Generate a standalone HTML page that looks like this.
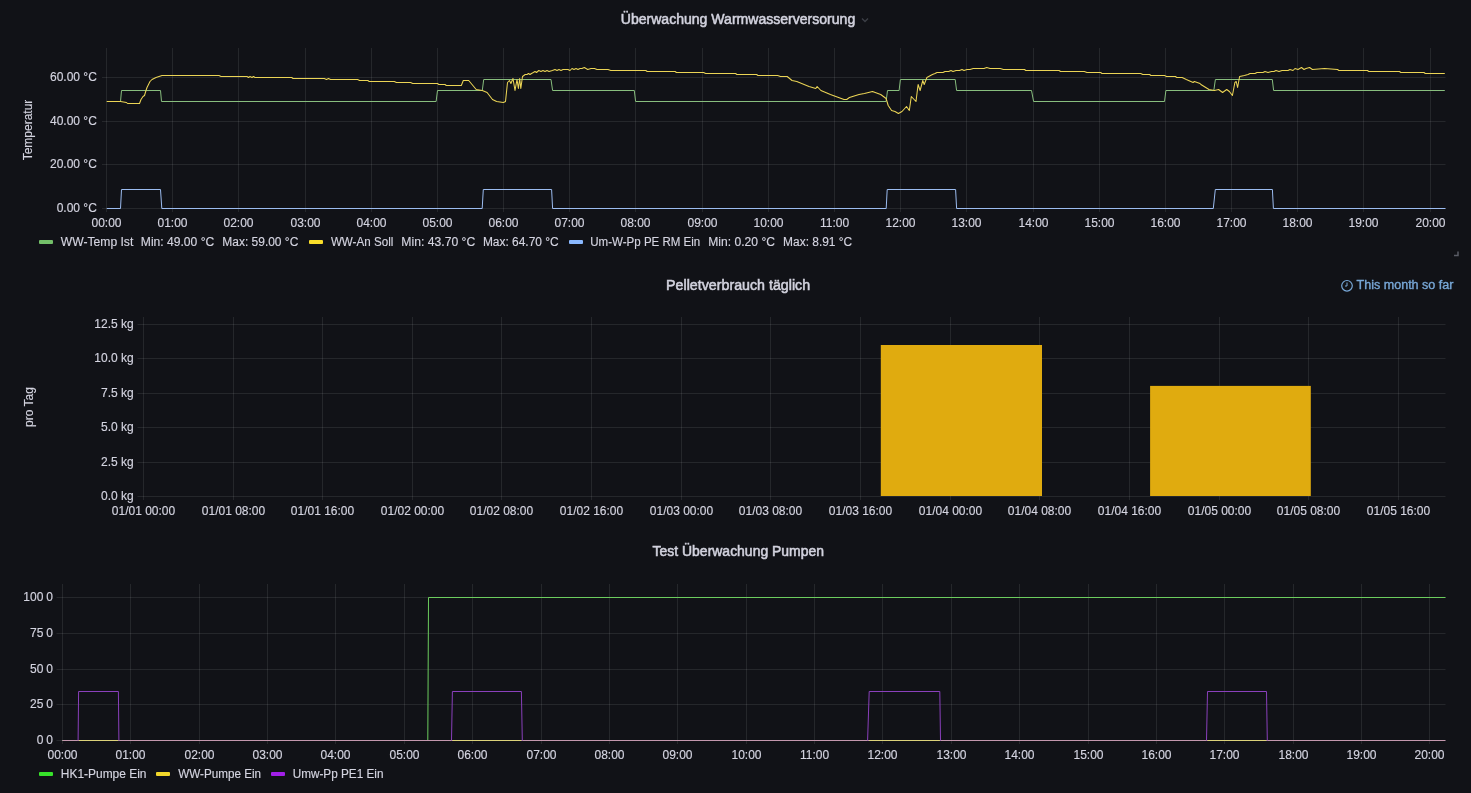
<!DOCTYPE html>
<html><head><meta charset="utf-8"><style>
html,body{margin:0;padding:0;background:#111217;width:1471px;height:793px;overflow:hidden}
svg{display:block;will-change:transform;font-family:"Liberation Sans",sans-serif}
text{stroke:#d4d4e0;stroke-width:0.15px}
.title{stroke:#d0d0dc;stroke-width:0.55px}
.tm{stroke:#78A8D8;stroke-width:0.35px}
</style></head><body>
<svg width="1471" height="793" viewBox="0 0 1471 793">
<text x="738.0" y="23.5" text-anchor="middle" font-size="14" fill="#d4d4e0" font-weight="normal" class="title" textLength="234.5" lengthAdjust="spacingAndGlyphs">Überwachung Warmwasserversorung</text>
<path d="M862 18.5L865 21.5L868 18.5" stroke="#3c3e46" stroke-width="1.4" fill="none"/>
<path d="M106.5 48V212M172.5 48V212M238.5 48V212M305.5 48V212M371.5 48V212M437.5 48V212M503.5 48V212M569.5 48V212M635.5 48V212M702.5 48V212M768.5 48V212M834.5 48V212M900.5 48V212M966.5 48V212M1033.5 48V212M1099.5 48V212M1165.5 48V212M1231.5 48V212M1297.5 48V212M1363.5 48V212M1430.5 48V212M102 208.5H1445.5M102 164.5H1445.5M102 121.5H1445.5M102 77.5H1445.5" stroke="rgba(240,250,255,0.09)" stroke-width="1" fill="none"/>
<text x="96.8" y="211.8" text-anchor="end" font-size="12" fill="#d4d4e0" font-weight="normal" >0.00 °C</text>
<text x="96.8" y="167.8" text-anchor="end" font-size="12" fill="#d4d4e0" font-weight="normal" >20.00 °C</text>
<text x="96.8" y="124.8" text-anchor="end" font-size="12" fill="#d4d4e0" font-weight="normal" >40.00 °C</text>
<text x="96.8" y="80.8" text-anchor="end" font-size="12" fill="#d4d4e0" font-weight="normal" >60.00 °C</text>
<text x="106.5" y="226.5" text-anchor="middle" font-size="12" fill="#d4d4e0" font-weight="normal" >00:00</text>
<text x="172.5" y="226.5" text-anchor="middle" font-size="12" fill="#d4d4e0" font-weight="normal" >01:00</text>
<text x="238.5" y="226.5" text-anchor="middle" font-size="12" fill="#d4d4e0" font-weight="normal" >02:00</text>
<text x="305.5" y="226.5" text-anchor="middle" font-size="12" fill="#d4d4e0" font-weight="normal" >03:00</text>
<text x="371.5" y="226.5" text-anchor="middle" font-size="12" fill="#d4d4e0" font-weight="normal" >04:00</text>
<text x="437.5" y="226.5" text-anchor="middle" font-size="12" fill="#d4d4e0" font-weight="normal" >05:00</text>
<text x="503.5" y="226.5" text-anchor="middle" font-size="12" fill="#d4d4e0" font-weight="normal" >06:00</text>
<text x="569.5" y="226.5" text-anchor="middle" font-size="12" fill="#d4d4e0" font-weight="normal" >07:00</text>
<text x="635.5" y="226.5" text-anchor="middle" font-size="12" fill="#d4d4e0" font-weight="normal" >08:00</text>
<text x="702.5" y="226.5" text-anchor="middle" font-size="12" fill="#d4d4e0" font-weight="normal" >09:00</text>
<text x="768.5" y="226.5" text-anchor="middle" font-size="12" fill="#d4d4e0" font-weight="normal" >10:00</text>
<text x="834.5" y="226.5" text-anchor="middle" font-size="12" fill="#d4d4e0" font-weight="normal" >11:00</text>
<text x="900.5" y="226.5" text-anchor="middle" font-size="12" fill="#d4d4e0" font-weight="normal" >12:00</text>
<text x="966.5" y="226.5" text-anchor="middle" font-size="12" fill="#d4d4e0" font-weight="normal" >13:00</text>
<text x="1033.5" y="226.5" text-anchor="middle" font-size="12" fill="#d4d4e0" font-weight="normal" >14:00</text>
<text x="1099.5" y="226.5" text-anchor="middle" font-size="12" fill="#d4d4e0" font-weight="normal" >15:00</text>
<text x="1165.5" y="226.5" text-anchor="middle" font-size="12" fill="#d4d4e0" font-weight="normal" >16:00</text>
<text x="1231.5" y="226.5" text-anchor="middle" font-size="12" fill="#d4d4e0" font-weight="normal" >17:00</text>
<text x="1297.5" y="226.5" text-anchor="middle" font-size="12" fill="#d4d4e0" font-weight="normal" >18:00</text>
<text x="1363.5" y="226.5" text-anchor="middle" font-size="12" fill="#d4d4e0" font-weight="normal" >19:00</text>
<text x="1430.5" y="226.5" text-anchor="middle" font-size="12" fill="#d4d4e0" font-weight="normal" >20:00</text>
<text x="0.0" y="0.0" text-anchor="middle" font-size="12" fill="#d4d4e0" font-weight="normal" transform="translate(31.6,130) rotate(-90)">Temperatur</text>
<rect x="39" y="240" width="14" height="4" fill="#73BF69" rx="1"/>
<text x="60.8" y="246.0" text-anchor="start" font-size="12" fill="#d4d4e0" font-weight="normal"  textLength="72.5" lengthAdjust="spacingAndGlyphs">WW-Temp Ist</text>
<text x="140.8" y="246.0" text-anchor="start" font-size="12" fill="#d4d4e0" font-weight="normal"  textLength="73.5" lengthAdjust="spacingAndGlyphs">Min: 49.00 °C</text>
<text x="222.3" y="246.0" text-anchor="start" font-size="12" fill="#d4d4e0" font-weight="normal"  textLength="76" lengthAdjust="spacingAndGlyphs">Max: 59.00 °C</text>
<rect x="309" y="240" width="14" height="4" fill="#FADE2A" rx="1"/>
<text x="330.9" y="246.0" text-anchor="start" font-size="12" fill="#d4d4e0" font-weight="normal"  textLength="62.4" lengthAdjust="spacingAndGlyphs">WW-An Soll</text>
<text x="401.3" y="246.0" text-anchor="start" font-size="12" fill="#d4d4e0" font-weight="normal"  textLength="74" lengthAdjust="spacingAndGlyphs">Min: 43.70 °C</text>
<text x="482.9" y="246.0" text-anchor="start" font-size="12" fill="#d4d4e0" font-weight="normal"  textLength="75.8" lengthAdjust="spacingAndGlyphs">Max: 64.70 °C</text>
<rect x="569" y="240" width="14" height="4" fill="#8AB8FF" rx="1"/>
<text x="590.3" y="246.0" text-anchor="start" font-size="12" fill="#d4d4e0" font-weight="normal"  textLength="110" lengthAdjust="spacingAndGlyphs">Um-W-Pp PE RM Ein</text>
<text x="708.3" y="246.0" text-anchor="start" font-size="12" fill="#d4d4e0" font-weight="normal"  textLength="66.7" lengthAdjust="spacingAndGlyphs">Min: 0.20 °C</text>
<text x="783.1" y="246.0" text-anchor="start" font-size="12" fill="#d4d4e0" font-weight="normal"  textLength="69.1" lengthAdjust="spacingAndGlyphs">Max: 8.91 °C</text>
<text x="738.1" y="289.6" text-anchor="middle" font-size="14" fill="#d4d4e0" font-weight="normal" class="title" textLength="144" lengthAdjust="spacingAndGlyphs">Pelletverbrauch täglich</text>
<circle cx="1347" cy="285.8" r="5.3" stroke="#78A8D8" stroke-width="1.2" fill="none"/><path d="M1347 282.5V286H1345" stroke="#78A8D8" stroke-width="1" fill="none"/>
<text x="1453.5" y="288.7" text-anchor="end" font-size="12" fill="#78A8D8" font-weight="normal" class="tm" textLength="97" lengthAdjust="spacingAndGlyphs">This month so far</text>
<path d="M1458 251.5V255.5H1454" stroke="#5a5c66" stroke-width="1.5" fill="none"/>
<path d="M143.5 317V500M233.5 317V500M322.5 317V500M412.5 317V500M501.5 317V500M591.5 317V500M681.5 317V500M770.5 317V500M860.5 317V500M950.5 317V500M1039.5 317V500M1129.5 317V500M1219.5 317V500M1308.5 317V500M1398.5 317V500M137.5 496.5H1445.5M137.5 462.5H1445.5M137.5 427.5H1445.5M137.5 393.5H1445.5M137.5 358.5H1445.5M137.5 324.5H1445.5" stroke="rgba(240,250,255,0.09)" stroke-width="1" fill="none"/>
<text x="133.7" y="499.8" text-anchor="end" font-size="12" fill="#d4d4e0" font-weight="normal" >0.0 kg</text>
<text x="133.7" y="465.8" text-anchor="end" font-size="12" fill="#d4d4e0" font-weight="normal" >2.5 kg</text>
<text x="133.7" y="430.8" text-anchor="end" font-size="12" fill="#d4d4e0" font-weight="normal" >5.0 kg</text>
<text x="133.7" y="396.8" text-anchor="end" font-size="12" fill="#d4d4e0" font-weight="normal" >7.5 kg</text>
<text x="133.7" y="361.8" text-anchor="end" font-size="12" fill="#d4d4e0" font-weight="normal" >10.0 kg</text>
<text x="133.7" y="327.8" text-anchor="end" font-size="12" fill="#d4d4e0" font-weight="normal" >12.5 kg</text>
<text x="143.5" y="514.5" text-anchor="middle" font-size="12" fill="#d4d4e0" font-weight="normal" >01/01 00:00</text>
<text x="233.5" y="514.5" text-anchor="middle" font-size="12" fill="#d4d4e0" font-weight="normal" >01/01 08:00</text>
<text x="322.5" y="514.5" text-anchor="middle" font-size="12" fill="#d4d4e0" font-weight="normal" >01/01 16:00</text>
<text x="412.5" y="514.5" text-anchor="middle" font-size="12" fill="#d4d4e0" font-weight="normal" >01/02 00:00</text>
<text x="501.5" y="514.5" text-anchor="middle" font-size="12" fill="#d4d4e0" font-weight="normal" >01/02 08:00</text>
<text x="591.5" y="514.5" text-anchor="middle" font-size="12" fill="#d4d4e0" font-weight="normal" >01/02 16:00</text>
<text x="681.5" y="514.5" text-anchor="middle" font-size="12" fill="#d4d4e0" font-weight="normal" >01/03 00:00</text>
<text x="770.5" y="514.5" text-anchor="middle" font-size="12" fill="#d4d4e0" font-weight="normal" >01/03 08:00</text>
<text x="860.5" y="514.5" text-anchor="middle" font-size="12" fill="#d4d4e0" font-weight="normal" >01/03 16:00</text>
<text x="950.5" y="514.5" text-anchor="middle" font-size="12" fill="#d4d4e0" font-weight="normal" >01/04 00:00</text>
<text x="1039.5" y="514.5" text-anchor="middle" font-size="12" fill="#d4d4e0" font-weight="normal" >01/04 08:00</text>
<text x="1129.5" y="514.5" text-anchor="middle" font-size="12" fill="#d4d4e0" font-weight="normal" >01/04 16:00</text>
<text x="1219.5" y="514.5" text-anchor="middle" font-size="12" fill="#d4d4e0" font-weight="normal" >01/05 00:00</text>
<text x="1308.5" y="514.5" text-anchor="middle" font-size="12" fill="#d4d4e0" font-weight="normal" >01/05 08:00</text>
<text x="1398.5" y="514.5" text-anchor="middle" font-size="12" fill="#d4d4e0" font-weight="normal" >01/05 16:00</text>
<text x="0.0" y="0.0" text-anchor="middle" font-size="12" fill="#d4d4e0" font-weight="normal" transform="translate(33,407) rotate(-90)">pro Tag</text>
<rect x="880.8" y="345" width="161.2" height="151" fill="#E0AB0F"/>
<rect x="1150.1" y="385.9" width="160.7" height="110.1" fill="#E0AB0F"/>
<text x="738.3" y="555.7" text-anchor="middle" font-size="14" fill="#d4d4e0" font-weight="normal" class="title" textLength="171.5" lengthAdjust="spacingAndGlyphs">Test Überwachung Pumpen</text>
<path d="M62.5 584V744M130.5 584V744M199.5 584V744M267.5 584V744M335.5 584V744M404.5 584V744M472.5 584V744M541.5 584V744M609.5 584V744M677.5 584V744M746.5 584V744M814.5 584V744M882.5 584V744M951.5 584V744M1019.5 584V744M1088.5 584V744M1156.5 584V744M1224.5 584V744M1293.5 584V744M1361.5 584V744M1429.5 584V744M56.5 740.5H1445.5M56.5 704.5H1445.5M56.5 669.5H1445.5M56.5 633.5H1445.5M56.5 597.5H1445.5" stroke="rgba(240,250,255,0.09)" stroke-width="1" fill="none"/>
<text x="43.4" y="743.8" text-anchor="end" font-size="12" fill="#d4d4e0" font-weight="normal" >0</text>
<text x="53.0" y="743.8" text-anchor="end" font-size="12" fill="#d4d4e0" font-weight="normal" >0</text>
<text x="43.4" y="707.8" text-anchor="end" font-size="12" fill="#d4d4e0" font-weight="normal" >25</text>
<text x="53.0" y="707.8" text-anchor="end" font-size="12" fill="#d4d4e0" font-weight="normal" >0</text>
<text x="43.4" y="672.8" text-anchor="end" font-size="12" fill="#d4d4e0" font-weight="normal" >50</text>
<text x="53.0" y="672.8" text-anchor="end" font-size="12" fill="#d4d4e0" font-weight="normal" >0</text>
<text x="43.4" y="636.8" text-anchor="end" font-size="12" fill="#d4d4e0" font-weight="normal" >75</text>
<text x="53.0" y="636.8" text-anchor="end" font-size="12" fill="#d4d4e0" font-weight="normal" >0</text>
<text x="43.4" y="600.8" text-anchor="end" font-size="12" fill="#d4d4e0" font-weight="normal" >100</text>
<text x="53.0" y="600.8" text-anchor="end" font-size="12" fill="#d4d4e0" font-weight="normal" >0</text>
<text x="62.5" y="758.5" text-anchor="middle" font-size="12" fill="#d4d4e0" font-weight="normal" >00:00</text>
<text x="130.5" y="758.5" text-anchor="middle" font-size="12" fill="#d4d4e0" font-weight="normal" >01:00</text>
<text x="199.5" y="758.5" text-anchor="middle" font-size="12" fill="#d4d4e0" font-weight="normal" >02:00</text>
<text x="267.5" y="758.5" text-anchor="middle" font-size="12" fill="#d4d4e0" font-weight="normal" >03:00</text>
<text x="335.5" y="758.5" text-anchor="middle" font-size="12" fill="#d4d4e0" font-weight="normal" >04:00</text>
<text x="404.5" y="758.5" text-anchor="middle" font-size="12" fill="#d4d4e0" font-weight="normal" >05:00</text>
<text x="472.5" y="758.5" text-anchor="middle" font-size="12" fill="#d4d4e0" font-weight="normal" >06:00</text>
<text x="541.5" y="758.5" text-anchor="middle" font-size="12" fill="#d4d4e0" font-weight="normal" >07:00</text>
<text x="609.5" y="758.5" text-anchor="middle" font-size="12" fill="#d4d4e0" font-weight="normal" >08:00</text>
<text x="677.5" y="758.5" text-anchor="middle" font-size="12" fill="#d4d4e0" font-weight="normal" >09:00</text>
<text x="746.5" y="758.5" text-anchor="middle" font-size="12" fill="#d4d4e0" font-weight="normal" >10:00</text>
<text x="814.5" y="758.5" text-anchor="middle" font-size="12" fill="#d4d4e0" font-weight="normal" >11:00</text>
<text x="882.5" y="758.5" text-anchor="middle" font-size="12" fill="#d4d4e0" font-weight="normal" >12:00</text>
<text x="951.5" y="758.5" text-anchor="middle" font-size="12" fill="#d4d4e0" font-weight="normal" >13:00</text>
<text x="1019.5" y="758.5" text-anchor="middle" font-size="12" fill="#d4d4e0" font-weight="normal" >14:00</text>
<text x="1088.5" y="758.5" text-anchor="middle" font-size="12" fill="#d4d4e0" font-weight="normal" >15:00</text>
<text x="1156.5" y="758.5" text-anchor="middle" font-size="12" fill="#d4d4e0" font-weight="normal" >16:00</text>
<text x="1224.5" y="758.5" text-anchor="middle" font-size="12" fill="#d4d4e0" font-weight="normal" >17:00</text>
<text x="1293.5" y="758.5" text-anchor="middle" font-size="12" fill="#d4d4e0" font-weight="normal" >18:00</text>
<text x="1361.5" y="758.5" text-anchor="middle" font-size="12" fill="#d4d4e0" font-weight="normal" >19:00</text>
<text x="1429.5" y="758.5" text-anchor="middle" font-size="12" fill="#d4d4e0" font-weight="normal" >20:00</text>
<rect x="39" y="772" width="14" height="4" fill="#37E22A" rx="1"/>
<text x="60.8" y="778.3" text-anchor="start" font-size="12" fill="#d4d4e0" font-weight="normal"  textLength="85.7" lengthAdjust="spacingAndGlyphs">HK1-Pumpe Ein</text>
<rect x="156" y="772" width="14" height="4" fill="#F2D72B" rx="1"/>
<text x="178.2" y="778.3" text-anchor="start" font-size="12" fill="#d4d4e0" font-weight="normal"  textLength="82.9" lengthAdjust="spacingAndGlyphs">WW-Pumpe Ein</text>
<rect x="271" y="772" width="14" height="4" fill="#A21FE8" rx="1"/>
<text x="292.7" y="778.3" text-anchor="start" font-size="12" fill="#d4d4e0" font-weight="normal"  textLength="90.8" lengthAdjust="spacingAndGlyphs">Umw-Pp PE1 Ein</text>
<path d="M106.8 101.5 L120.5 101.5 L121.5 90.5 L160.5 90.5 L161.5 101.5 L436.1 101.5 L437.5 90.5 L482.3 90.5 L483.7 79.5 L551.0 79.5 L552.6 90.5 L634.3 90.5 L635.6 101.5 L886.1 101.5 L887.5 90.5 L899.1 90.5 L900.4 79.5 L955.2 79.5 L956.6 90.5 L1031.5 90.5 L1033.6 101.5 L1164.5 101.5 L1165.9 90.5 L1213.8 90.5 L1215.4 79.5 L1272.3 79.5 L1273.6 90.5 L1444.8 90.5" stroke="#88BE7E" stroke-width="1" fill="none" stroke-linejoin="round"/>
<path d="M106.8 101.5 L120.0 101.5 L120.5 101.5 L126.5 102.5 L127.5 103.5 L139.5 103.5 L141.0 99.5 L143.0 96.5 L144.5 95.5 L146.0 90.5 L147.0 87.5 L150.0 81.5 L152.0 79.5 L156.0 77.5 L162.0 75.5 L217.0 75.5 L219.0 75.5 L221.0 76.5 L245.0 76.5 L247.0 76.5 L248.5 77.5 L250.0 76.5 L252.0 77.5 L253.5 76.5 L255.0 77.5 L291.7 77.5 L293.0 78.5 L324.3 78.5 L326.5 79.5 L328.5 78.5 L330.5 79.5 L332.5 79.5 L357.6 79.5 L359.6 80.5 L367.8 80.5 L369.2 81.5 L394.3 81.5 L396.4 82.5 L410.6 82.5 L412.7 83.5 L435.8 83.5 L437.5 83.5 L438.8 84.5 L445.0 84.5 L446.3 85.5 L461.3 85.5 L463.3 80.5 L468.7 80.5 L476.2 89.5 L482.3 90.5 L487.1 92.5 L492.5 99.5 L496.6 101.5 L503.4 102.5 L505.5 101.5 L507.5 82.5 L509.5 80.5 L510.9 83.5 L513.0 78.5 L515.0 90.5 L517.0 79.5 L518.4 88.5 L519.7 78.5 L520.8 88.5 L522.5 76.5 L525.2 74.5 L527.0 74.5 L528.5 73.5 L530.0 74.5 L531.5 73.5 L533.3 72.5 L535.0 71.5 L536.5 72.5 L538.8 70.5 L541.0 71.5 L543.0 70.5 L545.0 71.5 L547.0 70.5 L549.0 71.5 L552.4 70.5 L555.0 69.5 L557.0 70.5 L559.0 69.5 L561.0 70.5 L563.0 69.5 L566.0 69.5 L568.0 69.5 L570.0 70.5 L572.0 68.5 L574.0 69.5 L576.0 68.5 L578.0 69.5 L580.0 68.5 L582.0 68.5 L584.3 67.5 L587.7 69.5 L591.0 68.5 L594.5 68.5 L597.0 69.5 L608.1 69.5 L610.8 70.5 L645.8 70.5 L647.2 71.5 L675.1 71.5 L676.4 72.5 L703.6 72.5 L705.7 73.5 L735.6 73.5 L736.9 74.5 L756.6 74.5 L758.0 75.5 L777.7 75.5 L780.4 76.5 L787.2 76.5 L792.0 80.5 L796.8 81.5 L809.0 86.5 L815.8 88.5 L817.1 86.5 L820.9 90.5 L830.4 94.5 L844.0 99.5 L846.7 99.5 L849.4 97.5 L859.0 94.5 L864.4 93.5 L872.5 91.5 L880.7 94.5 L886.1 98.5 L888.2 105.5 L891.6 110.5 L895.0 111.5 L898.4 113.5 L902.0 111.5 L906.5 106.5 L909.3 110.5 L911.3 96.5 L916.0 101.5 L918.1 84.5 L920.1 90.5 L922.8 80.5 L924.2 84.5 L926.9 77.5 L932.4 74.5 L935.0 73.5 L937.0 72.5 L940.5 72.5 L943.0 72.5 L945.0 71.5 L948.7 71.5 L951.0 70.5 L953.0 71.5 L956.0 70.5 L959.6 70.5 L962.0 69.5 L964.0 70.5 L967.0 69.5 L970.0 69.5 L973.2 68.5 L976.0 68.5 L978.0 68.5 L981.0 68.5 L984.0 68.5 L986.7 67.5 L990.0 68.5 L1000.3 68.5 L1003.4 69.5 L1024.5 69.5 L1025.8 70.5 L1059.1 70.5 L1060.5 71.5 L1084.3 71.5 L1087.0 72.5 L1100.6 72.5 L1102.0 73.5 L1140.7 73.5 L1142.8 74.5 L1149.6 74.5 L1150.9 75.5 L1164.5 75.5 L1166.6 76.5 L1175.4 76.5 L1176.8 77.5 L1182.2 77.5 L1186.3 79.5 L1193.1 82.5 L1194.4 81.5 L1200.0 83.5 L1200.9 84.5 L1209.0 89.5 L1214.5 90.5 L1218.6 89.5 L1222.6 92.5 L1226.7 89.5 L1229.4 91.5 L1232.4 95.5 L1234.9 82.5 L1236.2 81.5 L1237.6 87.5 L1239.6 76.5 L1244.4 75.5 L1248.0 74.5 L1250.0 73.5 L1252.5 73.5 L1255.0 73.5 L1257.0 72.5 L1260.7 72.5 L1263.0 72.5 L1265.0 71.5 L1268.0 72.5 L1271.6 71.5 L1274.0 71.5 L1276.0 70.5 L1279.0 71.5 L1282.0 70.5 L1285.2 70.5 L1288.0 70.5 L1290.0 69.5 L1293.0 70.5 L1295.0 68.5 L1298.0 69.5 L1301.5 67.5 L1304.0 69.5 L1306.0 68.5 L1309.6 67.5 L1312.4 69.5 L1324.6 68.5 L1337.5 69.5 L1338.9 70.5 L1367.4 70.5 L1368.8 71.5 L1399.5 71.5 L1400.8 72.5 L1424.0 72.5 L1425.3 73.5 L1444.8 73.5" stroke="#EBD455" stroke-width="1.05" fill="none" stroke-linejoin="round"/>
<path d="M106.8 208.5 L120.5 208.5 L121.5 189.5 L160.5 189.5 L161.8 208.5 L482.2 208.5 L483.3 189.5 L551.6 189.5 L552.6 208.5 L886.2 208.5 L887.2 189.5 L955.6 189.5 L956.6 208.5 L1213.3 208.5 L1215.3 189.5 L1272.4 189.5 L1273.4 208.5 L1445.5 208.5" stroke="#9CBCF0" stroke-width="1" fill="none" stroke-linejoin="round"/>
<path d="M62.3 740.5 L427.8 740.5 L428.5 597.5 L1445.5 597.5" stroke="#6CCC5E" stroke-width="1" fill="none"/>
<path d="M62.3 740.5H1445.5" stroke="#C498AE" stroke-width="1" fill="none"/>
<path d="M78.6 740.5H118.4" stroke="#DCD27A" stroke-width="1" fill="none"/>
<path d="M452.4 740.5H521.4" stroke="#DCD27A" stroke-width="1" fill="none"/>
<path d="M869.2 740.5H939.8" stroke="#DCD27A" stroke-width="1" fill="none"/>
<path d="M1207.5 740.5H1266.5" stroke="#DCD27A" stroke-width="1" fill="none"/>
<path d="M78.1 740.5L78.6 691.5H118.4L118.9 740.5" stroke="#8A40BC" stroke-width="1" fill="none" stroke-linejoin="round"/>
<path d="M451.5 740.5L452.4 691.5H521.4L522.3 740.5" stroke="#8A40BC" stroke-width="1" fill="none" stroke-linejoin="round"/>
<path d="M867.6 740.5L869.2 691.5H939.8L940.5 740.5" stroke="#8A40BC" stroke-width="1" fill="none" stroke-linejoin="round"/>
<path d="M1206.5 740.5L1207.5 691.5H1266.5L1267.3 740.5" stroke="#8A40BC" stroke-width="1" fill="none" stroke-linejoin="round"/>
</svg></body></html>
